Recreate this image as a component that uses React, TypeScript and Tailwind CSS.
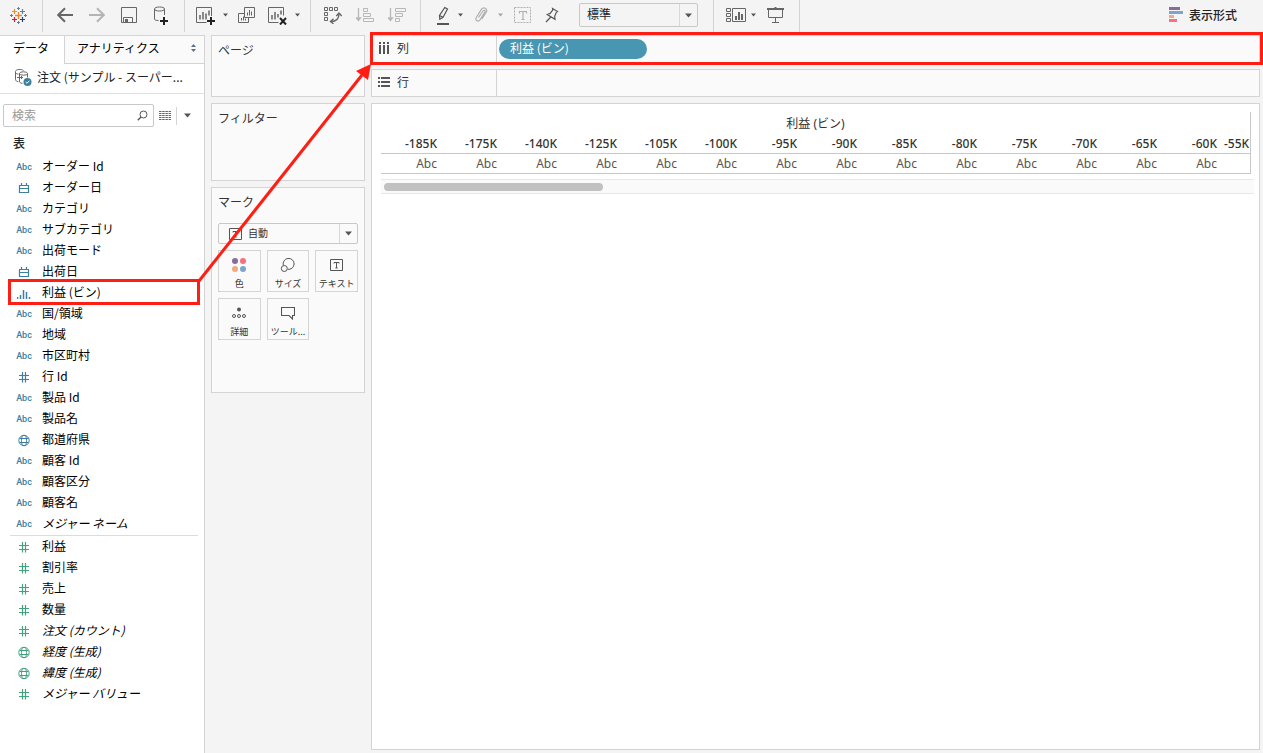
import type { ReactNode } from "react";

type FieldIcon = "abc" | "date" | "bin" | "number" | "geo";

type Field = {
  name: string;
  icon: FieldIcon;
  italic?: boolean;
  marked?: boolean;
};

const dimensions: Field[] = [
  { name: "オーダー Id", icon: "abc" },
  { name: "オーダー日", icon: "date" },
  { name: "カテゴリ", icon: "abc" },
  { name: "サブカテゴリ", icon: "abc" },
  { name: "出荷モード", icon: "abc" },
  { name: "出荷日", icon: "date" },
  { name: "利益 (ビン)", icon: "bin", marked: true },
  { name: "国/領域", icon: "abc" },
  { name: "地域", icon: "abc" },
  { name: "市区町村", icon: "abc" },
  { name: "行 Id", icon: "number" },
  { name: "製品 Id", icon: "abc" },
  { name: "製品名", icon: "abc" },
  { name: "都道府県", icon: "geo" },
  { name: "顧客 Id", icon: "abc" },
  { name: "顧客区分", icon: "abc" },
  { name: "顧客名", icon: "abc" },
  { name: "メジャー ネーム", icon: "abc", italic: true },
];

const measures: Field[] = [
  { name: "利益", icon: "number" },
  { name: "割引率", icon: "number" },
  { name: "売上", icon: "number" },
  { name: "数量", icon: "number" },
  { name: "注文 (カウント)", icon: "number", italic: true },
  { name: "経度 (生成)", icon: "geo", italic: true },
  { name: "緯度 (生成)", icon: "geo", italic: true },
  { name: "メジャー バリュー", icon: "number", italic: true },
];

const bins = [
  "-185K",
  "-175K",
  "-140K",
  "-125K",
  "-105K",
  "-100K",
  "-95K",
  "-90K",
  "-85K",
  "-80K",
  "-75K",
  "-70K",
  "-65K",
  "-60K",
];

const Caret = () => (
  <svg width="5" height="4" viewBox="0 0 5 4" className="block">
    <path d="M0 .5h5L2.5 3.5z" fill="#555" />
  </svg>
);

const BigCaret = () => (
  <svg width="7" height="5" viewBox="0 0 7 5" className="block">
    <path d="M0 .5h7L3.5 4.5z" fill="#555" />
  </svg>
);

const Logo = () => (
  <svg width="18" height="18" viewBox="0 0 18 18" fill="none">
    <path d="M9.500 6v7M6 9.500h7" stroke="#e8853b" strokeWidth="1.300" />
    <path d="M5.500 3v5M3 5.500h5" stroke="#eb9129" strokeWidth="1.200" />
    <path d="M13.500 3v5M11 5.500h5" stroke="#5b879b" strokeWidth="1.200" />
    <path d="M5.500 11v5M3 13.500h5" stroke="#c72035" strokeWidth="1.200" />
    <path d="M13.500 11v5M11 13.500h5" stroke="#1f447e" strokeWidth="1.200" />
    <path d="M9.500 1v3M8 2.500h3M9.500 15v3M8 16.500h3" stroke="#59879b" />
    <path d="M2.500 8v3M1 9.500h3M16.500 8v3M15 9.500h3" stroke="#7a6ea5" />
  </svg>
);

const BackIcon = () => (
  <svg width="16" height="16" viewBox="0 0 16 16" fill="none">
    <path d="M16 8H1M8 1.200 1.200 8 8 14.800" stroke="#666" strokeWidth="2" />
  </svg>
);

const ForwardIcon = () => (
  <svg width="16" height="16" viewBox="0 0 16 16" fill="none">
    <path d="M0 8h15M8 1.200 14.800 8 8 14.800" stroke="#b4b4b4" strokeWidth="2" />
  </svg>
);

const SaveIcon = () => (
  <svg width="16" height="16" viewBox="0 0 16 16" fill="none">
    <path d="M.5.5h15v15H.5z" stroke="#666" />
    <path d="M2.500 15v-4.500h9V15" stroke="#666" />
    <path d="M4 12h3v3H4z" fill="#666" />
  </svg>
);

const DataIcon = () => (
  <svg width="16" height="20" viewBox="0 0 16 20" fill="none">
    <path
      d="M1.500 4c0-1.300 2.200-2 5-2s5 .7 5 2-2.200 2-5 2-5-.7-5-2zv10c0 1 1.500 1.500 4 1.500M11.500 4v6"
      stroke="#666"
    />
    <path d="M11 12v8M7 16h8" stroke="#222" strokeWidth="2" />
  </svg>
);

const NewSheetIcon = () => (
  <svg width="20" height="20" viewBox="0 0 20 20" fill="none">
    <path d="M10.500 17.500H.5V2.500h15v8.500" stroke="#666" />
    <path d="M4 10v4.500M7 7v7.500M10 8.500v6M13 5.500v5" stroke="#666" strokeWidth="1.500" />
    <path d="M15 12v8M11 16h8" stroke="#222" strokeWidth="2" />
  </svg>
);

const DuplicateIcon = () => (
  <svg width="18" height="18" viewBox="0 0 18 18" fill="none">
    <path d="M6.500 1.500h10v10h-10z" stroke="#666" />
    <path d="M6.500 7.500h-6v9h10v-5" stroke="#666" />
    <path d="M9.500 6.500v3M11.500 4v5.500M13.500 5.500v4M3.500 12v2.500M5.500 10.500v4M7.500 12.500v2" stroke="#666" />
  </svg>
);

const ClearIcon = () => (
  <svg width="20" height="20" viewBox="0 0 20 20" fill="none">
    <path d="M10.500 17.500H.5V2.500h15v8" stroke="#666" />
    <path d="M4 10v4.500M7 7v7.500M10 9v3.500M13 5.500v4" stroke="#666" strokeWidth="1.500" />
    <path d="m12 13 6 6.500m0-6.500-6 6.500" stroke="#222" strokeWidth="2" />
  </svg>
);

const SwapIcon = () => (
  <svg width="18" height="18" viewBox="0 0 18 18" fill="none" stroke="#666">
    <path d="M.5 1.500h3v3h-3zM5.500 1.500h3v3h-3zM10.500 1.500h3v3h-3zM.5 6.500h3v3h-3zM.5 11.500h3v3h-3z" />
    <path d="M15 7.500c0 5-3 8-8 8" strokeWidth="1.400" />
    <path d="m12.300 10 2.700-3 2.700 3M9.500 12.800l-3 2.700 3 2.300" strokeWidth="1.400" />
  </svg>
);

const SortAscIcon = () => (
  <svg width="18" height="18" viewBox="0 0 18 18" fill="none" stroke="#b8b8b8">
    <path d="M2.500 2v12M.5 12l2 2.500 2-2.500z" strokeWidth="1.300" />
    <path d="M7.500 2.500h4v3h-4zM7.500 7.500h7v3h-7zM7.500 12.500h10v3h-10z" />
  </svg>
);

const SortDescIcon = () => (
  <svg width="18" height="18" viewBox="0 0 18 18" fill="none" stroke="#b8b8b8">
    <path d="M2.500 2v12M.5 12l2 2.500 2-2.500z" strokeWidth="1.300" />
    <path d="M7.500 2.500h10v3h-10zM7.500 7.500h7v3h-7zM7.500 12.500h4v3h-4z" />
  </svg>
);

const HighlightIcon = () => (
  <svg width="14" height="20" viewBox="0 0 14 20" fill="none" stroke="#555">
    <path d="M8.800 2.500 11.500 4 7 12.200l-3.200 2-.3-3.700zM3.500 10.500 7 12.200" strokeWidth="1.200" />
    <path d="M1 19h12" strokeWidth="2" />
  </svg>
);

const ClipIcon = () => (
  <svg width="14" height="18" viewBox="0 0 14 18" fill="none" stroke="#b0b0b0">
    <path
      d="M4.500 11.500 9 5c.9-1.500 2.800-.3 1.900 1.200L6 13.800c-1.800 2.500-5.300.5-3.700-2.300L7.500 3.200c2-3 6.500-.5 4.800 2.800L8 13"
      strokeWidth="1.200"
    />
  </svg>
);

const LabelIcon = () => (
  <svg width="18" height="18" viewBox="0 0 18 18" fill="none" stroke="#b0b0b0">
    <path d="M.5 1.500h16v15H.5z" strokeDasharray="2 1" />
    <path d="M5.500 7.500v-2h7v2M9 5.500v8M7.500 13.500h3" strokeWidth="1.200" />
  </svg>
);

const PinIcon = () => (
  <svg width="14" height="18" viewBox="0 0 14 18" fill="none" stroke="#555">
    <path
      d="m7.500 2.500 5 3-1.200.8-1.600 4 .3 3L2.300 8.500l2.800-1.100 2.600-3.400zM5.800 11 1 16"
      strokeWidth="1.200"
    />
  </svg>
);

const CardsIcon = () => (
  <svg width="20" height="16" viewBox="0 0 20 16" fill="none" stroke="#666">
    <path d="M.5 1.500h4v3h-4zM.5 6.500h4v3h-4zM.5 11.500h4v3h-4zM6.500 1.500h13v13h-13z" />
    <path d="M10 9v4M13 5v8M16 7v6" strokeWidth="2" />
  </svg>
);

const PresentIcon = () => (
  <svg width="17" height="16" viewBox="0 0 17 16" fill="none" stroke="#666">
    <path d="M0 2h17M8.500 0v2" strokeWidth="2" />
    <path d="M1.500 2v8.500h14V2M8.500 10.500v5M5 15.500h7" />
  </svg>
);

const ShowMeIcon = () => (
  <svg width="14" height="15" viewBox="0 0 14 15">
    <path d="M0 0h11v3H0z" fill="#866e98" />
    <path d="M0 4h14v3H0z" fill="#7fa4cc" />
    <path d="M0 8h5v3H0z" fill="#f2a982" />
    <path d="M0 12h8v3H0z" fill="#f6707f" />
  </svg>
);

const TextIcon = () => (
  <svg width="14" height="14" viewBox="0 0 14 14" fill="none" stroke="#555">
    <path d="M.5 1.500h12v11H.5z" />
    <path d="M4 5.500v-1h5v1M6.500 4.500v5.500M5.300 10h2.400" />
  </svg>
);

const FieldGlyph = ({ icon }: { icon: FieldIcon }) => {
  if (icon === "abc") {
    return <span className="font-['Roboto',sans-serif] text-[9px] font-medium leading-none pt-0.5">Abc</span>;
  }
  return (
    <svg width="14" height="14" viewBox="0 0 14 14" fill="none" stroke="currentColor">
      {icon === "date" && (
        <path d="M2.500 4.500h9v7h-9zM2.500 7.500h9M4.500 2v2.500M9.500 2v2.500" strokeWidth="1.200" />
      )}
      {icon === "bin" && (
        <path d="M.5 11v2M3.500 9v4M6.500 4v9M9.500 6v7M12.500 11v2" strokeWidth="1.500" />
      )}
      {icon === "number" && (
        <path d="M5.500 2v10.500M8.500 2v10.500M2 5.500h10M2 9.500h10" strokeWidth="1.200" />
      )}
      {icon === "geo" && (
        <>
          <circle cx="7" cy="7.500" r="5.200" />
          <ellipse cx="7" cy="7.500" rx="2.500" ry="5.200" />
          <path d="M2.500 5.500h9M2.500 9.500h9" />
        </>
      )}
    </svg>
  );
};

const FieldRow = ({ field, color }: { field: Field; color: string }) => (
  <li className="relative flex items-center h-[21px] pl-4">
    <span className={`flex justify-center w-4 ${color}`}>
      <FieldGlyph icon={field.icon} />
    </span>
    <span className={field.italic ? "ml-2.5 pb-0.5 italic" : "ml-2.5 pb-0.5"}>{field.name}</span>
    {field.marked && (
      <span className="absolute -top-[3px] -bottom-0.5 left-2 right-1 border-3 border-[#ff1e14]" />
    )}
  </li>
);

const ToolButton = ({ label, children }: { label: string; children: ReactNode }) => (
  <button type="button" aria-label={label} className="block shrink-0">
    {children}
  </button>
);

const Toolbar = () => (
  <header className="flex h-[35px] items-start bg-[#f4f4f4]">
    <div className="flex items-center h-8 w-[43px] pl-[9px] pb-0.5 border-r border-[#d4d4d4]">
      <ToolButton label="Tableau"><Logo /></ToolButton>
    </div>
    <div className="flex items-center gap-4 h-8 pl-3.5 pr-[15px] pb-0.5 border-r border-[#d4d4d4]">
      <ToolButton label="元に戻す"><BackIcon /></ToolButton>
      <ToolButton label="やり直す"><ForwardIcon /></ToolButton>
      <ToolButton label="保存"><SaveIcon /></ToolButton>
      <ToolButton label="新しいデータ ソース"><DataIcon /></ToolButton>
    </div>
    <div className="flex items-center h-8 pl-[11px] pr-2.5 pb-0.5 border-r border-[#d4d4d4]">
      <div className="flex items-center gap-[7px]">
        <ToolButton label="新しいワークシート"><NewSheetIcon /></ToolButton>
        <ToolButton label="ワークシートのメニュー"><Caret /></ToolButton>
      </div>
      <div className="flex items-center gap-3 ml-2.5">
        <ToolButton label="複製"><DuplicateIcon /></ToolButton>
        <div className="flex items-center gap-[7px]">
          <ToolButton label="クリア"><ClearIcon /></ToolButton>
          <ToolButton label="クリアのメニュー"><Caret /></ToolButton>
        </div>
      </div>
    </div>
    <div className="flex items-center gap-3.5 h-8 pl-[13px] pr-3.5 pb-0.5 border-r border-[#d4d4d4]">
      <ToolButton label="行と列の交換"><SwapIcon /></ToolButton>
      <ToolButton label="昇順"><SortAscIcon /></ToolButton>
      <ToolButton label="降順"><SortDescIcon /></ToolButton>
    </div>
    <div className="flex items-center h-8 pl-[15px] pr-[15px] pb-0.5 border-r border-[#d4d4d4]">
      <div className="flex items-center gap-2">
        <ToolButton label="ハイライト"><HighlightIcon /></ToolButton>
        <ToolButton label="ハイライトのメニュー"><Caret /></ToolButton>
      </div>
      <div className="flex items-center gap-2.5 ml-[11px] mr-[11px]">
        <ToolButton label="グループ"><ClipIcon /></ToolButton>
        <span className="opacity-50">
          <ToolButton label="グループのメニュー"><Caret /></ToolButton>
        </span>
      </div>
      <ToolButton label="マーク ラベル"><LabelIcon /></ToolButton>
      <span className="ml-[13px] mr-5">
        <ToolButton label="軸の固定"><PinIcon /></ToolButton>
      </span>
      <div className="relative w-[119px]">
        <select
          aria-label="適合"
          className="block appearance-none w-full h-6 pl-[7px] pb-0.5 rounded-xs border border-[#c8c8c8] bg-[#f4f4f4] text-xs text-[#222]"
        >
          <option>標準</option>
        </select>
        <span className="pointer-events-none absolute inset-y-px right-px flex items-center justify-center w-[18px] border-l border-[#d8d8d8]">
          <BigCaret />
        </span>
      </div>
    </div>
    <div className="flex items-center h-8 pl-3 pr-[15px] pb-0.5 border-r border-[#d4d4d4]">
      <div className="flex items-center gap-[5px]">
        <ToolButton label="カードの表示/非表示"><CardsIcon /></ToolButton>
        <ToolButton label="カードのメニュー"><Caret /></ToolButton>
      </div>
      <span className="ml-[11px]">
        <ToolButton label="プレゼンテーション モード"><PresentIcon /></ToolButton>
      </span>
    </div>
    <button type="button" className="flex items-center gap-1.5 h-8 pb-[3px] ml-auto mr-[26px] text-xs font-medium text-[#222]">
      <ShowMeIcon />
      表示形式
    </button>
  </header>
);

const DataPane = () => (
  <aside className="w-[205px] shrink-0 border-t border-r border-[#d4d4d4] bg-white text-black">
    <div className="flex h-7">
      <button type="button" className="w-16 pr-0.5 pb-1">データ</button>
      <button
        type="button"
        className="flex flex-1 items-center justify-between pl-3 pr-2 pb-1 border-l border-b border-[#d4d4d4] bg-[#fafafa]"
      >
        アナリティクス
        <svg width="5" height="8" viewBox="0 0 5 8" fill="#5c6f87">
          <path d="M0 3h5L2.500 0zM0 5h5L2.500 8z" />
        </svg>
      </button>
    </div>
    <div className="flex items-center h-[30px] pl-3.5 pb-1 border-b border-[#e2e2e2] text-[#222]">
      <svg width="18" height="18" viewBox="0 0 18 18" fill="none" stroke="#666" className="shrink-0">
        <path d="M9.500 2.500C8 1 1.500 1 1.500 3.500v8c0 1 1 2 3 2.300M1.500 4.500c.5 1 1.500 1.500 3 1.700" />
        <ellipse cx="9.500" cy="5.500" rx="4" ry="1.700" />
        <path d="M5.500 5.500v8c0 1 1 1.600 3 1.900M13.500 5.500v4M3 9.500h6M7.500 8v3" />
        <circle cx="13.500" cy="14" r="4" fill="#3c7f9e" stroke="none" />
        <path d="m11.700 14 1.300 1.300 2.400-2.600" stroke="#fff" />
      </svg>
      <span className="ml-[5px]">注文 (サンプル - スーパー...</span>
    </div>
    <div className="flex items-center h-[23px] mt-2.5 pl-[3px]">
      <label className="relative w-[151px]">
        <input
          type="text"
          aria-label="検索"
          placeholder="検索"
          className="block w-full h-[23px] px-2 pb-0.5 rounded-xs border border-[#c8c8c8] text-xs placeholder:text-[#999]"
        />
        <svg width="11" height="11" viewBox="0 0 11 11" fill="none" stroke="#555" className="absolute right-1.5 top-1.5">
          <circle cx="6.500" cy="4.500" r="3.500" />
          <path d="M4 7 .8 10.200" strokeWidth="1.300" />
        </svg>
      </label>
      <button type="button" aria-label="表示" className="ml-[5px]">
        <svg width="12" height="10" viewBox="0 0 12 10" stroke="#666">
          <path
            d="M0 .5h12M0 2.500h12M0 4.500h12M0 6.500h12M0 8.500h12"
            strokeDasharray="2.500 .7"
          />
        </svg>
      </button>
      <button type="button" aria-label="メニュー" className="flex items-center h-[18px] ml-[5px] pl-[7px] border-l border-[#d4d4d4]">
        <BigCaret />
      </button>
    </div>
    <h2 className="mt-[5px] pl-[13px] leading-[21px] font-medium text-[#222]">表</h2>
    <ul className="mt-[3px]">
      {dimensions.map((f) => (
        <FieldRow key={f.name} field={f} color="text-[#3c7f9e]" />
      ))}
    </ul>
    <hr className="mt-px ml-2.5 mr-1.5 border-[#dcdcdc]" />
    <ul>
      {measures.map((f) => (
        <FieldRow key={f.name} field={f} color="text-[#43a37e]" />
      ))}
    </ul>
  </aside>
);

const MarkButton = ({ label, children }: { label: string; children: ReactNode }) => (
  <button
    type="button"
    className="flex flex-col items-center h-[42px] pt-1.5 border border-[#d4d4d4] text-[9px] leading-[14px] whitespace-nowrap"
  >
    <span className="flex items-center justify-center h-4 mb-1">{children}</span>
    {label}
  </button>
);

const Cards = () => (
  <div className="flex flex-col gap-1.5 w-[154px] shrink-0 text-[#333]">
    <section className="h-[62px] px-1.5 pt-[5px] border border-[#d4d4d4] bg-[#fafafa]">
      <h2>ページ</h2>
    </section>
    <section className="h-[78px] px-1.5 pt-[5px] border border-[#d4d4d4] bg-[#fafafa]">
      <h2>フィルター</h2>
    </section>
    <section className="h-[206px] px-1.5 pt-[5px] border border-[#d4d4d4] bg-[#fafafa]">
      <h2>マーク</h2>
      <div className="relative mt-3 mb-1.5">
        <select
          aria-label="マーク タイプ"
          className="block appearance-none w-full h-[21px] pl-[29px] pb-0.5 rounded-xs border border-[#c8c8c8] text-[10px]"
        >
          <option>自動</option>
        </select>
        <span className="pointer-events-none absolute inset-y-0 left-[11px] flex items-center">
          <TextIcon />
        </span>
        <span className="pointer-events-none absolute inset-y-px right-px flex items-center justify-center w-[18px] border-l border-[#d8d8d8]">
          <BigCaret />
        </span>
      </div>
      <div className="grid grid-cols-3 gap-1.5">
        <MarkButton label="色">
          <svg width="14" height="14" viewBox="0 0 14 14">
            <circle cx="3" cy="3" r="3" fill="#866e98" />
            <circle cx="11" cy="3" r="3" fill="#f6707f" />
            <circle cx="3" cy="11" r="3" fill="#f2a982" />
            <circle cx="11" cy="11" r="3" fill="#7fa4cc" />
          </svg>
        </MarkButton>
        <MarkButton label="サイズ">
          <svg width="16" height="16" viewBox="0 0 16 16" fill="none" stroke="#555">
            <path d="M3.300 8.300A5.500 5.500 0 1 1 7.700 12.300" />
            <circle cx="4.300" cy="11.500" r="3" />
          </svg>
        </MarkButton>
        <MarkButton label="テキスト">
          <TextIcon />
        </MarkButton>
        <MarkButton label="詳細">
          <svg width="14" height="12" viewBox="0 0 14 12" fill="none" stroke="#555">
            <circle cx="7" cy="2.500" r="2" fill="#555" stroke="none" />
            <circle cx="2" cy="9" r="1.500" />
            <circle cx="7" cy="9" r="1.500" />
            <circle cx="12" cy="9" r="1.500" />
          </svg>
        </MarkButton>
        <MarkButton label="ツール...">
          <svg width="14" height="14" viewBox="0 0 14 14" fill="none" stroke="#555">
            <path d="M.5 1.500h13v8h-2v3.500L8 9.500H.5z" strokeWidth="1.100" />
          </svg>
        </MarkButton>
      </div>
    </section>
  </div>
);

const Shelf = ({ label, icon, children }: { label: string; icon: ReactNode; children?: ReactNode }) => (
  <section className="relative flex h-7 border border-[#d4d4d4] bg-[#fafafa]">
    <h2 className="flex items-center gap-[7px] w-[125px] pl-1.5 pb-0.5 border-r border-[#d4d4d4] text-[#333]">
      {icon}
      {label}
    </h2>
    {children}
  </section>
);

const Sheet = () => (
  <section className="flex-1 pt-2 border border-[#d4d4d4] bg-white">
    <div className="ml-[9px] mr-2 border-r border-[#c8c8c8]">
      <table className="w-full table-fixed border-separate border-spacing-0 font-['Noto_Sans','Noto_Sans_CJK_JP',sans-serif] text-xs text-[#333]">
        <colgroup>
          {bins.map((b, i) => (
            <col key={b} className={i === 0 ? "w-[59px]" : "w-[60px]"} />
          ))}
          <col />
        </colgroup>
        <thead>
          <tr>
            <th colSpan={bins.length + 1} className="h-[21px] p-0 pt-0.5 font-normal">
              利益 (ビン)
            </th>
          </tr>
          <tr>
            {bins.map((b) => (
              <th key={b} className="h-[21px] p-0 pt-0.5 pr-[3px] border-b border-[#c8c8c8] text-right font-medium">
                {b}
              </th>
            ))}
            <th className="h-[21px] p-0 pt-0.5 pl-1 border-b border-[#c8c8c8] text-left font-medium overflow-hidden whitespace-nowrap">
              -55K
            </th>
          </tr>
        </thead>
        <tbody>
          <tr>
            {bins.map((b) => (
              <td key={b} className="h-5 p-0 pr-[3px] border-b border-[#c8c8c8] text-right text-[#555]">
                Abc
              </td>
            ))}
            <td className="h-5 p-0 border-b border-[#c8c8c8]" />
          </tr>
        </tbody>
      </table>
    </div>
    <div className="h-[15px] mt-[5px] ml-[9px] mr-[5px] px-[3px] py-[3px] border-y border-[#e8e8e8] bg-[#fafafa]">
      <div className="h-2 w-[219px] rounded-full bg-[#c1c1c1]" />
    </div>
  </section>
);

const App = () => (
  <div className="relative flex flex-col min-h-screen overflow-hidden bg-[#f4f4f4] font-['Noto_Sans_CJK_JP',sans-serif] text-xs leading-[18px]">
    <Toolbar />
    <main className="flex flex-1">
      <DataPane />
      <div className="flex flex-1 gap-1.5 min-w-0 pl-1.5 pr-[3px] pb-[3px]">
        <Cards />
        <div className="flex flex-1 flex-col gap-1.5 min-w-0">
          <Shelf
            label="列"
            icon={
              <svg width="12" height="12" viewBox="0 0 12 12" fill="#555">
                <path d="M1 0h2v2H1zM5 0h2v2H5zM9 0h2v2H9zM1 3h2v9H1zM5 3h2v9H5zM9 3h2v9H9z" />
              </svg>
            }
          >
            <span className="flex items-center w-[148px] h-5 ml-0.5 mt-[3px] pl-[11px] pb-0.5 rounded-full bg-[#4996b2] text-white">
              利益 (ビン)
            </span>
            <span className="absolute -top-1 -bottom-[3px] -left-0.5 -right-1 border-3 border-[#ff1e14]" />
          </Shelf>
          <Shelf
            label="行"
            icon={
              <svg width="12" height="10" viewBox="0 0 12 10" fill="#555">
                <path d="M0 0h2v2H0zM0 4h2v2H0zM0 8h2v2H0zM3 0h9v2H3zM3 4h9v2H3zM3 8h9v2H3z" />
              </svg>
            }
          />
          <Sheet />
        </div>
      </div>
    </main>
    {/* drag arrow from the bin field to the columns shelf */}
    <svg
      width="180"
      height="222"
      viewBox="0 0 180 222"
      className="pointer-events-none absolute left-[195px] top-[62px]"
    >
      <path d="M4 219 167 13" stroke="#ff1e14" strokeWidth="3" />
      <path d="M176 2 161 9 173 18z" fill="#ff1e14" />
    </svg>
  </div>
);

export default App;
